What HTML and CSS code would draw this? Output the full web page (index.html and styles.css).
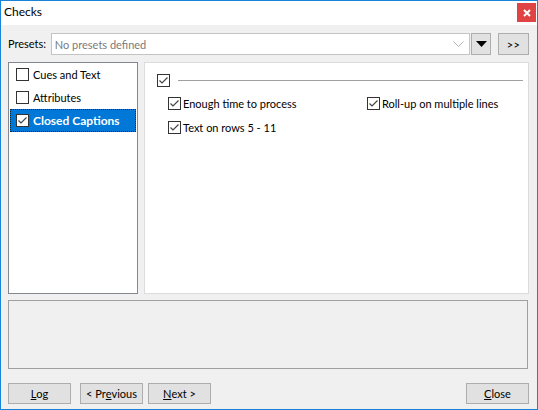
FILE: index.html
```html
<!DOCTYPE html>
<html>
<head>
<meta charset="utf-8">
<link rel="stylesheet" href="styles.css">
</head>
<body>
<div class="window">
  <div class="titlebar">
    <span class="title">Checks</span>
    <div class="close">
      <svg width="8" height="8" viewBox="0 0 8 8"><path d="M1 1 L7 7 M7 1 L1 7" stroke="#fff" stroke-width="2"/></svg>
    </div>
  </div>
  <div class="content">
    <div class="presets">
      <span class="label">Presets:</span>
      <div class="combo">
        <span class="placeholder">No presets defined</span>
        <svg class="chev" width="11" height="7" viewBox="0 0 11 7"><path d="M0.5 0.5 L5.5 5.5 L10.5 0.5" fill="none" stroke="#b4b4b4" stroke-width="1"/></svg>
      </div>
      <div class="btn drop">
        <svg width="11" height="6" viewBox="0 0 11 6"><path d="M0 0 H11 L5.5 6 Z" fill="#000"/></svg>
      </div>
      <div class="btn more">&gt;&gt;</div>
    </div>
    <div class="main">
      <div class="list">
        <div class="item">
          <svg class="cb" width="13" height="13" viewBox="0 0 13 13"><rect x="0.5" y="0.5" width="12" height="12" fill="#fff" stroke="#333"/></svg>
          <span>Cues and Text</span>
        </div>
        <div class="item">
          <svg class="cb" width="13" height="13" viewBox="0 0 13 13"><rect x="0.5" y="0.5" width="12" height="12" fill="#fff" stroke="#333"/></svg>
          <span>Attributes</span>
        </div>
        <div class="item selected">
          <svg class="cb" width="13" height="13" viewBox="0 0 13 13"><rect x="0.5" y="0.5" width="12" height="12" fill="#fff" stroke="#333"/><path d="M2.5 6.5 L5 9 L10.5 3.5" fill="none" stroke="#444" stroke-width="1.2"/></svg>
          <span>Closed Captions</span>
        </div>
      </div>
      <div class="panel">
        <div class="group-head">
          <svg class="cb" width="13" height="13" viewBox="0 0 13 13"><rect x="0.5" y="0.5" width="12" height="12" fill="#fff" stroke="#333"/><path d="M2.5 6.5 L5 9 L10.5 3.5" fill="none" stroke="#444" stroke-width="1.2"/></svg>
          <div class="rule"></div>
        </div>
        <div class="options">
          <div class="opt">
            <svg class="cb" width="13" height="13" viewBox="0 0 13 13"><rect x="0.5" y="0.5" width="12" height="12" fill="#fff" stroke="#333"/><path d="M2.5 6.5 L5 9 L10.5 3.5" fill="none" stroke="#444" stroke-width="1.2"/></svg>
            <span>Enough time to process</span>
          </div>
          <div class="opt">
            <svg class="cb" width="13" height="13" viewBox="0 0 13 13"><rect x="0.5" y="0.5" width="12" height="12" fill="#fff" stroke="#333"/><path d="M2.5 6.5 L5 9 L10.5 3.5" fill="none" stroke="#444" stroke-width="1.2"/></svg>
            <span>Roll-up on multiple lines</span>
          </div>
          <div class="opt">
            <svg class="cb" width="13" height="13" viewBox="0 0 13 13"><rect x="0.5" y="0.5" width="12" height="12" fill="#fff" stroke="#333"/><path d="M2.5 6.5 L5 9 L10.5 3.5" fill="none" stroke="#444" stroke-width="1.2"/></svg>
            <span>Text on rows 5 - 11</span>
          </div>
        </div>
      </div>
    </div>
    <div class="status"></div>
    <div class="buttons">
      <div class="btn push"><u>L</u>og</div>
      <div class="btn push prev">&lt; Pr<u>e</u>vious</div>
      <div class="btn push next"><u>N</u>ext &gt;</div>
      <div class="spacer"></div>
      <div class="btn push"><u>C</u>lose</div>
    </div>
  </div>
</div>
</body>
</html>
```

FILE: styles.css
```css
* { box-sizing: border-box; }
html, body { margin: 0; padding: 0; }
body {
  width: 538px;
  height: 410px;
  font-family: Lato, "Noto Sans", sans-serif;
  font-size: 11px;
  color: #000;
}
.window {
  width: 538px;
  height: 410px;
  border: 1px solid #1883d7;
  background: #f0f0f0;
  display: flex;
  flex-direction: column;
}
.titlebar {
  height: 24px;
  background: #fff;
  display: flex;
  align-items: flex-start;
  justify-content: space-between;
}
.title {
  margin-left: 3px;
  margin-top: 3px;
  font-size: 12px;
  line-height: 16px;
}
.close {
  width: 19px;
  height: 19px;
  margin-top: 2px;
  margin-right: 1px;
  background: #e04343;
  display: flex;
  align-items: center;
  justify-content: center;
}
.content {
  flex: 1;
  display: flex;
  flex-direction: column;
  padding: 8px 8px 0 7px;
}
.presets {
  height: 22px;
  display: flex;
  align-items: center;
}
.label {
  width: 43px;
  line-height: 16px;
}
.combo {
  width: 421px;
  height: 22px;
  border: 1px solid #c4c4c4;
  background: #fff;
  display: flex;
  align-items: center;
  justify-content: space-between;
  padding: 0 5px 0 3px;
}
.placeholder { color: #7a7a7a; }
.chev { margin-top: 1px; }
.btn {
  background: #e1e1e1;
  border: 1px solid #adadad;
  display: flex;
  align-items: center;
  justify-content: center;
}
.drop {
  width: 20px;
  height: 22px;
  margin-left: 1px;
}
.more {
  width: 31px;
  height: 22px;
  margin-left: 7px;
  letter-spacing: 0.5px;
}
.main {
  margin-top: 7px;
  height: 232px;
  display: flex;
  gap: 6px;
}
.list {
  width: 130px;
  border: 1px solid #828790;
  background: #fff;
  padding: 0 1px;
}
.item {
  height: 23px;
  display: flex;
  align-items: center;
  padding-left: 5px;
  gap: 4px;
  border: 1px solid transparent;
}
.item.selected {
  background: #0078d7;
  color: #fff;
  font-weight: bold;
  font-size: 12px;
  border: 1px dotted #1a1a1a;
}
.cb { flex: none; }
.panel {
  width: 385px;
  border: 1px solid #dcdcdc;
  background: #fff;
  padding: 11px 5px 0 12px;
}
.group-head {
  display: flex;
  align-items: center;
  gap: 8px;
  height: 13px;
}
.rule {
  flex: 1;
  height: 1px;
  background: #a0a0a0;
}
.options {
  margin-top: 10px;
  padding-left: 11px;
  display: grid;
  grid-template-columns: 199px 1fr;
  row-gap: 11px;
}
.opt {
  display: flex;
  align-items: center;
  gap: 2px;
  height: 13px;
}
.status {
  margin-top: 6px;
  height: 69px;
  border: 1px solid #a0a0a0;
  background: #f0f0f0;
  margin-right: 1px;
}
.buttons {
  margin-top: 14px;
  display: flex;
  height: 21px;
}
.push {
  width: 63px;
  height: 21px;
}
.prev { margin-left: 9px; }
.next { margin-left: 5px; }
.spacer { flex: 1; }
u { text-decoration: underline; text-underline-offset: 1px; }
```
